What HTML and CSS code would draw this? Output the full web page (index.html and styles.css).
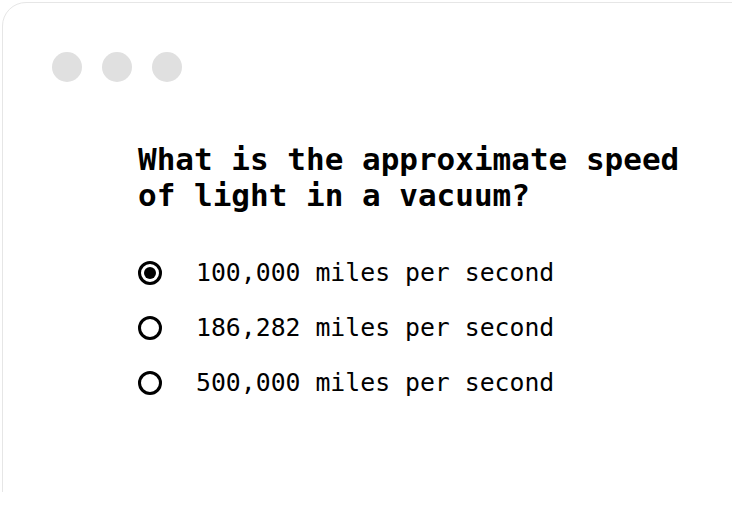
FILE: index.html
```html
<!DOCTYPE html>
<html>
<head>
<meta charset="utf-8">
<link rel="stylesheet" href="styles.css">
</head>
<body>
<div class="frame">
  <div class="card">
    <div class="dots">
      <span class="dot"></span><span class="dot"></span><span class="dot"></span>
    </div>
    <div class="quiz">
      <h1 class="question">What is the approximate speed of light in a vacuum?</h1>
      <ul class="options">
        <li class="option"><span class="radio checked"></span><span class="label">100,000 miles per second</span></li>
        <li class="option"><span class="radio"></span><span class="label">186,282 miles per second</span></li>
        <li class="option"><span class="radio"></span><span class="label">500,000 miles per second</span></li>
      </ul>
    </div>
  </div>
</div>
</body>
</html>
```
FILE: styles.css
```css
html, body {
  margin: 0;
  padding: 0;
  background: #ffffff;
}
.frame {
  height: 492px;
  overflow: hidden;
  padding: 2px 0 0 2px;
  box-sizing: border-box;
}
.card {
  width: 760px;
  height: 560px;
  border: 1px solid #e6e6e6;
  border-radius: 24px;
  box-sizing: border-box;
  background: #fff;
  padding: 49px 0 0 49px;
}
.dots {
  display: flex;
  gap: 20px;
}
.dot {
  width: 30px;
  height: 30px;
  border-radius: 50%;
  background: #e0e0e0;
}
.quiz {
  padding: 59px 0 0 86px;
  font-family: "DejaVu Sans Mono", "Liberation Mono", monospace;
  color: #000;
}
.question {
  margin: 0;
  width: 560px;
  font-size: 31px;
  line-height: 36px;
  font-weight: bold;
  letter-spacing: 0;
}
.options {
  list-style: none;
  margin: 0;
  padding: 44px 0 0 0;
  display: flex;
  flex-direction: column;
  gap: 23px;
}
.option {
  display: flex;
  align-items: center;
  height: 32px;
}
.radio {
  width: 24px;
  height: 24px;
  border: 3px solid #000;
  border-radius: 50%;
  box-sizing: border-box;
  margin-right: 34px;
  display: flex;
  align-items: center;
  justify-content: center;
}
.radio.checked::after {
  content: "";
  width: 12px;
  height: 12px;
  border-radius: 50%;
  background: #000;
}
.label {
  font-size: 24.8px;
  line-height: 32px;
}
```
